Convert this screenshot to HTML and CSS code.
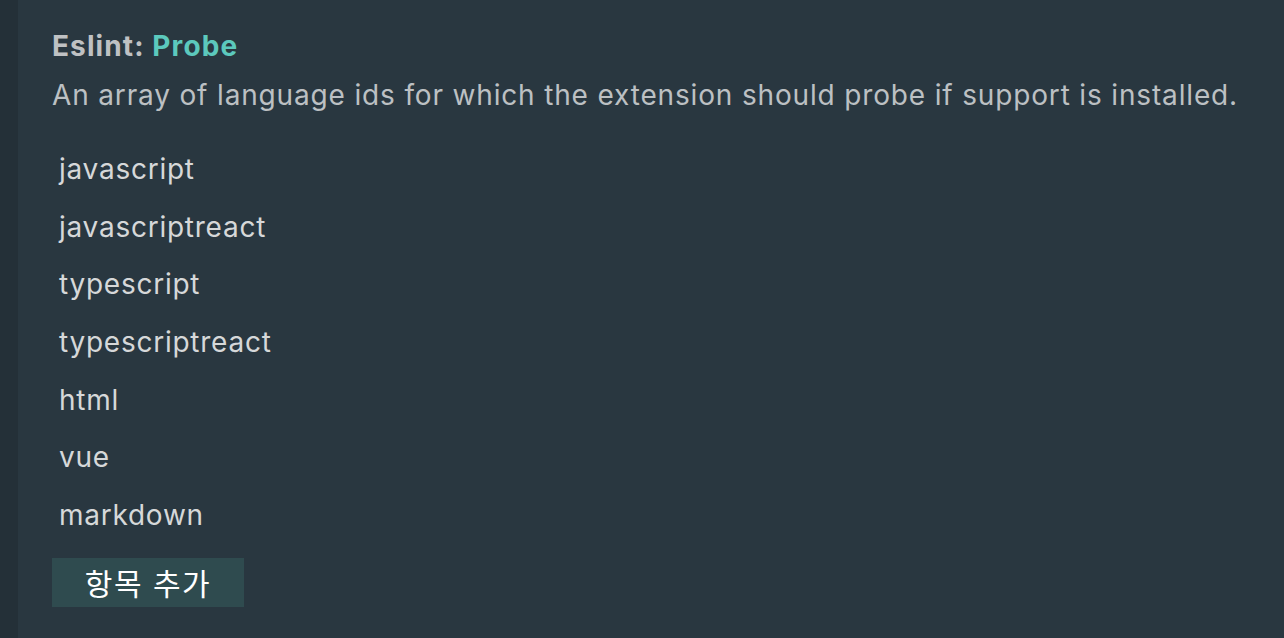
FILE: index.html
```html
<!DOCTYPE html>
<html lang="ko">
<head>
<meta charset="utf-8">
<link rel="stylesheet" href="styles.css">
</head>
<body>
<div class="page">
  <div class="gutter"></div>
  <main class="setting">
    <div class="title"><span class="cat">Eslint: </span><span class="name">Probe</span></div>
    <div class="desc">An array of language ids for which the extension should probe if support is installed.</div>
    <ul class="list">
      <li>javascript</li>
      <li>javascriptreact</li>
      <li>typescript</li>
      <li>typescriptreact</li>
      <li>html</li>
      <li>vue</li>
      <li>markdown</li>
    </ul>
    <button class="add">항목 추가</button>
  </main>
</div>
</body>
</html>
```

FILE: styles.css
```css
html, body {
  margin: 0;
  padding: 0;
  height: 100%;
  background: #293740;
}
.page {
  display: flex;
  height: 638px;
  font-family: Inter, "Noto Sans", "Noto Sans CJK KR", sans-serif;
}
.gutter {
  width: 18px;
  background: #243038;
  flex: none;
}
.setting {
  flex: 1;
  padding: 28px 0 0 34px;
}
.title {
  font-size: 28px;
  font-weight: 700;
  line-height: 36px;
  letter-spacing: 1.1px;
  color: #bfc1c3;
}
.title .name {
  color: #5cc9bd;
}
.desc {
  margin-top: 13px;
  font-size: 28px;
  line-height: 36px;
  letter-spacing: 0.84px;
  color: #bcc0c3;
}
.list {
  list-style: none;
  margin: 28px 0 0 0;
  padding: 0 0 0 7px;
}
.list li {
  font-size: 28px;
  line-height: 57.67px;
  height: 57.67px;
  letter-spacing: 0.75px;
  color: #d6d8d9;
}
.add {
  display: block;
  margin-top: 13px;
  width: 192px;
  height: 49px;
  border: none;
  background: #2f4b4f;
  color: #ffffff;
  font-family: "Noto Sans CJK KR", sans-serif;
  font-size: 30px;
  letter-spacing: 1.5px;
  padding: 0;
}
```
